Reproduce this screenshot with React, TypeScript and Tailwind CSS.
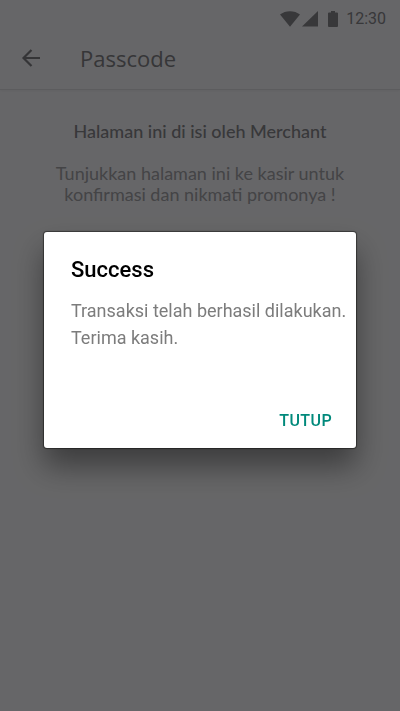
import React from "react";

function StatusBar() {
  return (
    <div className="flex h-9 items-center justify-end pr-3.5 pt-0.5 text-[#8c8c8c]">
      <svg width="20" height="16" viewBox="0 0 20 16" fill="currentColor" aria-hidden="true">
        <path d="M0 3.6C2.8 1.4 6.2 0.2 10 0.2s7.200 1.200 10 3.400L10 15.800z" />
      </svg>
      <svg className="ml-0.5" width="16" height="16" viewBox="0 0 16 16" fill="currentColor" aria-hidden="true">
        <path d="M16 0v15.500H0z" />
      </svg>
      <svg className="ml-2.5" width="10" height="16" viewBox="0 0 10 16" fill="currentColor" aria-hidden="true">
        <path d="M3 0h4v1.500h2a1 1 0 0 1 1 1V15a1 1 0 0 1-1 1H1a1 1 0 0 1-1-1V2.500a1 1 0 0 1 1-1h2z" />
      </svg>
      <span className="ml-2 text-[16px] leading-5">12:30</span>
    </div>
  );
}

function AppBar() {
  return (
    <header className="flex h-[54px] items-center border-b border-[#e6e6e6] px-5 pb-2.5 shadow-xs">
      <button type="button" aria-label="Kembali" className="text-[#848484]">
        <svg width="22" height="22" viewBox="0 0 22 22" fill="none" stroke="currentColor" strokeWidth="2.2" aria-hidden="true">
          <path d="M20 11H4M11.500 3L3.500 11l8 8" />
        </svg>
      </button>
      <h1 className="ml-[38px] font-['Open_Sans',sans-serif] text-[22px] leading-7 text-[#888888]">Passcode</h1>
    </header>
  );
}

export default function App() {
  return (
    <div className="relative flex min-h-screen flex-col bg-white font-['Roboto',sans-serif]">
      <StatusBar />
      <AppBar />
      <main className="flex-1 px-10 pt-[31px] text-center font-['Lato',sans-serif] text-[18px]">
        <h2 className="font-medium leading-[21px] text-[#8c8c8c]">Halaman ini di isi oleh Merchant</h2>
        <p className="mt-[21px] leading-[21px] text-[#aaaaaa]">
          Tunjukkan halaman ini ke kasir untuk konfirmasi dan nikmati promonya !
        </p>
      </main>

      <div className="fixed inset-0 flex flex-col bg-[#000003]/60 px-11 pt-[232px]">
        <section
          role="dialog"
          aria-modal="true"
          aria-labelledby="dialog-title"
          className="rounded-[3px] bg-white pb-[15px] pl-[27px] pr-2 pt-[25px] shadow-[0_0_1px_1px_rgba(0,0,0,0.45),0_18px_30px_rgba(0,0,0,0.42)]"
        >
          <h2 id="dialog-title" className="text-[22px] font-medium leading-[26px] text-black">Success</h2>
          <p className="mt-3.5 text-[18px] leading-[27px] text-[#7c7c7c]">
            Transaksi telah berhasil dilakukan. Terima kasih.
          </p>
          <div className="mt-[58px] flex justify-end">
            <button type="button" className="px-4 py-1 text-[16px] font-medium leading-4 tracking-wide text-[#00897b]">
              TUTUP
            </button>
          </div>
        </section>
      </div>
    </div>
  );
}
